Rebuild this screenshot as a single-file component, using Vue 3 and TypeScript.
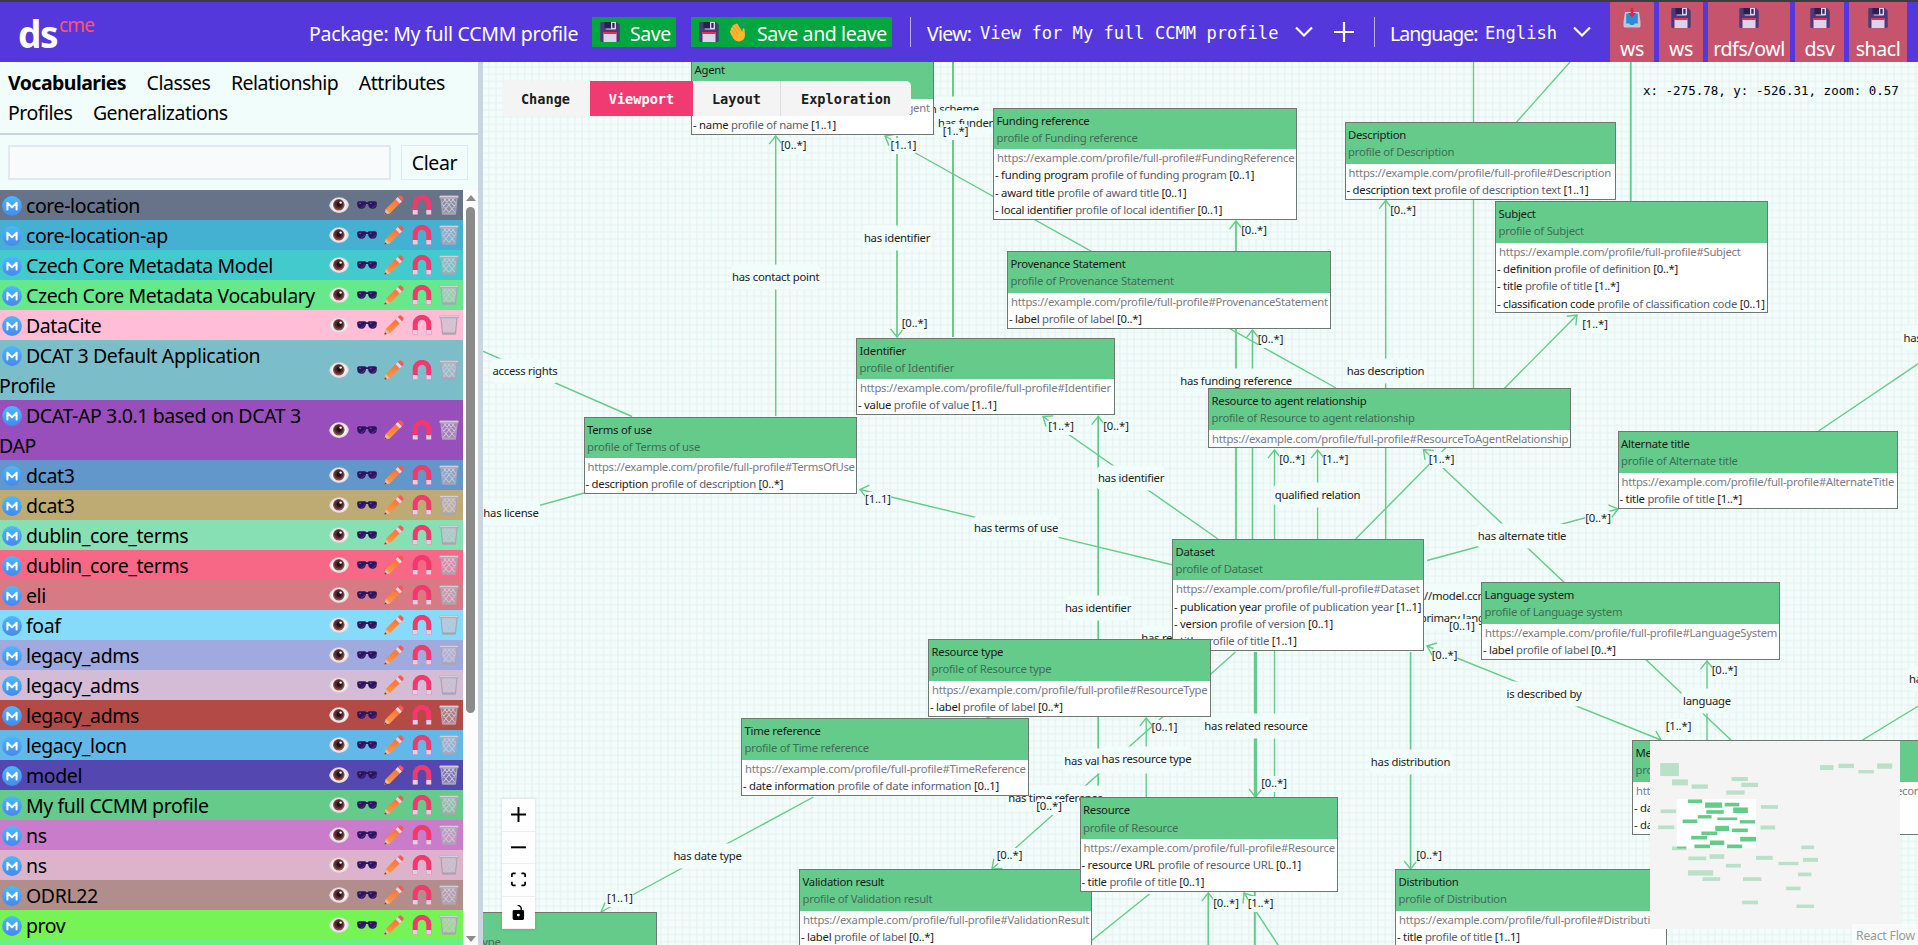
<script setup lang="ts">
interface Vocab { name: string; rest?: string; color: string }
interface Attr { name: string; card: string }
interface ClassNode { title: string; url: string; x: number; y: number; w: number; attrs: Attr[] }
type Edge = [number, number, number, number, string?, number?]
type Label = [string, number, number]

const vocabularies: Vocab[] = [
  { name: 'core-location', color: '#667389' },
  { name: 'core-location-ap', color: '#44b1d2' },
  { name: 'Czech Core Metadata Model', color: '#43cacd' },
  { name: 'Czech Core Metadata Vocabulary', color: '#66e88c' },
  { name: 'DataCite', color: '#ffbdd6' },
  { name: 'DCAT 3 Default Application', rest: 'Profile', color: '#7cbdca' },
  { name: 'DCAT-AP 3.0.1 based on DCAT 3', rest: 'DAP', color: '#994fbb' },
  { name: 'dcat3', color: '#6297cb' },
  { name: 'dcat3', color: '#bdab73' },
  { name: 'dublin_core_terms', color: '#86e0b4' },
  { name: 'dublin_core_terms', color: '#f76887' },
  { name: 'eli', color: '#d87a84' },
  { name: 'foaf', color: '#87dbfa' },
  { name: 'legacy_adms', color: '#a1aadf' },
  { name: 'legacy_adms', color: '#d4bcd6' },
  { name: 'legacy_adms', color: '#b44a45' },
  { name: 'legacy_locn', color: '#63b8ea' },
  { name: 'model', color: '#5447b0' },
  { name: 'My full CCMM profile', color: '#65cb8a' },
  { name: 'ns', color: '#c97cc9' },
  { name: 'ns', color: '#ddb3cb' },
  { name: 'ODRL22', color: '#b18d8c' },
  { name: 'prov', color: '#76f456' },
]
const rowIcons = ['eye', 'glasses', 'pencil', 'magnet', 'bin']
const tabs = ['Vocabularies', 'Classes', 'Relationship', 'Attributes', 'Profiles', 'Generalizations']
const exportsList = [
  { icon: 'inbox', text: 'ws', w: 44 },
  { icon: 'floppy', text: 'ws', w: 44 },
  { icon: 'floppy', text: 'rdfs/owl', w: 82 },
  { icon: 'floppy', text: 'dsv', w: 49 },
  { icon: 'floppy', text: 'shacl', w: 58 },
]

const a = (name: string, card: string): Attr => ({ name, card })
const nodes: ClassNode[] = [
  { title: 'Agent', url: 'Agent', x: 691, y: 57, w: 243, attrs: [a('name', '[1..1]')] },
  { title: 'Funding reference', url: 'FundingReference', x: 993, y: 107.5, w: 304, attrs: [a('funding program', '[0..1]'), a('award title', '[0..1]'), a('local identifier', '[0..1]')] },
  { title: 'Provenance Statement', url: 'ProvenanceStatement', x: 1007, y: 251, w: 323.5, attrs: [a('label', '[0..*]')] },
  { title: 'Identifier', url: 'Identifier', x: 856, y: 337.5, w: 259, attrs: [a('value', '[1..1]')] },
  { title: 'Terms of use', url: 'TermsOfUse', x: 583.5, y: 416.5, w: 273.5, attrs: [a('description', '[0..*]')] },
  { title: 'Description', url: 'Description', x: 1344.5, y: 122, w: 271, attrs: [a('description text', '[1..1]')] },
  { title: 'Subject', url: 'Subject', x: 1495, y: 201, w: 273, attrs: [a('definition', '[0..*]'), a('title', '[1..*]'), a('classification code', '[0..1]')] },
  { title: 'Resource to agent relationship', url: 'ResourceToAgentRelationship', x: 1208, y: 388, w: 363, attrs: [] },
  { title: 'Alternate title', url: 'AlternateTitle', x: 1617.5, y: 431, w: 280.5, attrs: [a('title', '[1..*]')] },
  { title: 'Dataset', url: 'Dataset', x: 1172, y: 538.7, w: 252, attrs: [a('publication year', '[1..1]'), a('version', '[0..1]'), a('title', '[1..1]')] },
  { title: 'Language system', url: 'LanguageSystem', x: 1481, y: 582, w: 299, attrs: [a('label', '[0..*]')] },
  { title: 'Resource type', url: 'ResourceType', x: 928, y: 639, w: 283, attrs: [a('label', '[0..*]')] },
  { title: 'Time reference', url: 'TimeReference', x: 741, y: 718, w: 288, attrs: [a('date information', '[0..1]')] },
  { title: 'Date type', url: 'DateType', x: 400, y: 912, w: 257, attrs: [] },
  { title: 'Validation result', url: 'ValidationResult', x: 799, y: 869, w: 293, attrs: [a('label', '[0..*]')] },
  { title: 'Resource', url: 'Resource', x: 1079.5, y: 797.3, w: 258.5, attrs: [a('resource URL', '[0..1]'), a('title', '[0..1]')] },
  { title: 'Distribution', url: 'Distribution', x: 1395, y: 869, w: 272, attrs: [a('title', '[1..1]')] },
  { title: 'Metadata record', url: 'MetadataRecord', x: 1632, y: 740, w: 290, attrs: [a('date created', '[0..1]'), a('date updated', '[0..*]')] },
]

/* x1, y1, x2, y2, arrow placement (e = end, s = start), stroke width */
const edges: Edge[] = [
  [775.7, 416, 775.7, 136, 'e'],
  [897, 136, 897, 337, 'e', 1.7],
  [953, 62, 953, 337, '', 2],
  [1336, 388, 885, 136, 'e'],
  [1385.7, 539, 1385.7, 200.5, 'e'],
  [1473.5, 62, 1473.5, 388],
  [1570, 62, 1516.6, 122],
  [1630.8, 62, 1630.8, 201, '', 1.8],
  [1355.6, 539, 1577, 315, 'e'],
  [1236, 539, 1236, 221, 'e', 1.8],
  [1252.5, 539, 1252.5, 330, 'e', 1.7],
  [1274.5, 539, 1274.5, 450, 'e'],
  [1317.6, 539, 1317.6, 450, 'e'],
  [1731, 740, 1423.5, 449.5, 'e'],
  [1427, 560.5, 1618, 509, 'e'],
  [1818.6, 431, 1920, 362.5],
  [1172, 564.7, 860, 489.5, 'e'],
  [1218, 539, 1043, 416.5, 'e'],
  [1098.2, 800, 1098.2, 416.5, 'e', 1.8],
  [632, 416.5, 480, 350],
  [584, 493, 480, 522],
  [1255.5, 652, 1255.5, 797, 'e', 3.4],
  [1274.5, 649, 1274.5, 797],
  [1146.2, 797, 1146.2, 718, 'e'],
  [1235.5, 652, 992, 869, 'e'],
  [1172, 630, 987, 718, 'e'],
  [813.5, 797, 601, 912, 'e'],
  [1410.6, 652, 1410.6, 869, 'e', 1.7],
  [1427, 646, 1661, 740, 'es'],
  [1707, 740, 1707, 661, 'e'],
  [1862.6, 740, 1920, 705],
  [1149.5, 894, 1086, 945],
  [1208.3, 950, 1208.3, 893, 'e', 1.7],
  [1254.8, 950, 1254.8, 890, '', 2],
  [1284, 954, 1244, 893, 'e'],
]

const labels: Label[] = [
  ['has contact point', 775.7, 277], ['has identifier', 897, 238], ['has identifier', 1131, 478],
  ['has identifier', 1098, 607.5], ['in scheme', 953, 108.5], ['has funder', 965.5, 123],
  ['has description', 1385.5, 371], ['has funding reference', 1236, 381], ['qualified relation', 1317.6, 495],
  ['has alternate title', 1522, 536], ['has terms of use', 1016, 528], ['access rights', 525, 371],
  ['has license', 511, 513], ['has related resource', 1256, 725.5], ['has validation result', 1115, 761],
  ['has resource type', 1146.5, 758.5], ['has time reference', 1055.5, 798], ['has date type', 707.5, 855.5],
  ['has distribution', 1410.5, 761.5], ['is described by', 1544, 694], ['language', 1707, 701],
  ['has relation', 1171, 638], ['https://model.ccmm.cz', 1453, 595.5], ['primary language', 1465, 618],
  ['has subject', 1932, 338], ['has agent', 1934, 679],
]
const cards: Label[] = [
  ['[0..*]', 793.5, 146], ['[1..1]', 903.5, 146], ['[1..*]', 955.5, 132], ['[0..*]', 914.5, 324],
  ['[0..*]', 1403, 210.5], ['[1..*]', 1595, 324.5], ['[0..*]', 1254, 231], ['[0..*]', 1270.5, 340],
  ['[0..*]', 1292, 459.5], ['[1..*]', 1335.5, 459.5], ['[1..*]', 1441.5, 459.5], ['[0..*]', 1598, 518.5],
  ['[1..1]', 878, 499.5], ['[1..*]', 1061, 426.5], ['[0..*]', 1116, 426.5], ['[0..*]', 1274, 783.5],
  ['[0..1]', 1164.5, 727.5], ['[0..*]', 1009.5, 856], ['[0..*]', 1049, 807], ['[1..1]', 620, 899],
  ['[0..*]', 1429, 856], ['[0..*]', 1444.5, 656], ['[1..*]', 1678.5, 726.5], ['[0..*]', 1724.5, 670.5],
  ['[0..*]', 1226, 903.5], ['[1..*]', 1260.5, 903.5], ['[0..1]', 1462, 627],
]

function head(tx: number, ty: number, fx: number, fy: number): string {
  const t = Math.atan2(fy - ty, fx - tx)
  const p = (s: number) => `${tx + 10.4 * Math.cos(t + s)} ${ty + 10.4 * Math.sin(t + s)}`
  return `M${p(0.67)}L${tx} ${ty}L${p(-0.67)}`
}
function arrows(e: Edge): string {
  let d = ''
  if (e[4]?.includes('e')) d += head(e[2], e[3], e[0], e[1])
  if (e[4]?.includes('s')) d += head(e[0], e[1], e[2], e[3])
  return d
}

/* minimap rectangles: x, y, width, height */
const miniOutside = [
  [25, 66, 46, 39], [54, 115, 39, 18], [102, 130, 40, 13], [200, 108, 40, 12], [224, 125, 41, 13], [187, 148, 45, 13],
  [417, 72, 33, 15], [462, 68, 38, 13], [511, 87, 38, 10], [557, 67, 37, 16], [26, 205, 38, 11], [20, 253, 40, 11],
  [272, 192, 42, 11], [271, 253, 36, 12], [54, 316, 35, 11], [94, 346, 44, 11], [146, 339, 36, 14], [186, 368, 37, 11],
  [260, 344, 41, 12], [371, 313, 31, 11], [315, 362, 49, 10], [375, 350, 37, 12], [93, 387, 62, 16], [129, 408, 43, 11],
  [228, 408, 45, 11], [363, 394, 33, 11], [334, 436, 35, 11], [226, 478, 39, 11], [359, 490, 43, 10],
]
const miniInside = [
  [93, 175, 35, 11], [135, 184, 42, 16], [183, 185, 36, 11], [204, 199, 36, 17], [138, 207, 43, 11], [117, 222, 34, 10],
  [80, 235, 36, 11], [165, 229, 49, 8], [220, 237, 38, 10], [160, 254, 34, 16], [201, 262, 39, 11], [126, 271, 39, 11],
  [101, 284, 39, 11], [221, 287, 39, 14], [147, 298, 35, 14], [109, 310, 38, 11], [189, 310, 37, 11], [66, 316, 23, 6],
]
</script>

<template>
  <div class="page">
    <svg class="defs" aria-hidden="true">
      <defs>
        <linearGradient id="gm" x1="0" y1="0" x2="0" y2="1"><stop offset="0" stop-color="#4ab9ff" /><stop offset="1" stop-color="#4688ee" /></linearGradient>
        <linearGradient id="gp" x1="0" y1="0" x2="0" y2="1"><stop offset="0" stop-color="#ff6a3c" /><stop offset="1" stop-color="#ff9f3c" /></linearGradient>
        <radialGradient id="ge"><stop offset="0.6" stop-color="#fff" /><stop offset="1" stop-color="#d9cfd6" /></radialGradient>
        <symbol id="i-m" viewBox="0 0 20 20"><circle cx="10" cy="10" r="9.9" fill="url(#gm)" /><path d="M5.4 13.6V6.8L10 11.4L14.6 6.8V13.6" fill="none" stroke="#fff" stroke-width="2" stroke-linejoin="round" stroke-linecap="round" /></symbol>
        <symbol id="i-eye" viewBox="0 0 20 20"><path d="M.1 10.5C1.3 5.5 5.5 2.300 10.2 2.300S18.800 5.300 19.900 9.500C19.200 14.800 14.500 17.900 10 17.900S1.300 14.800 .1 10.500Z" fill="url(#ge)" /><circle cx="9.800" cy="9.800" r="5.800" fill="#8a4f48" /><circle cx="9.800" cy="9.200" r="4.500" fill="#55262b" /><circle cx="10" cy="9.500" r="2.400" fill="#1d1119" /><circle cx="11.600" cy="7.600" r="1.200" fill="#fff" /></symbol>
        <symbol id="i-glasses" viewBox="0 0 20 20"><path d="M.2 7.200Q1 6 3 6.200H7.500Q9 6.200 9.300 7.200H10.700Q11 6.200 12.500 6.200H17Q19 6 19.800 7.200V9.500Q19.500 13.800 15.500 13.800Q11.500 13.800 11 9H9Q8.500 13.800 4.500 13.800Q.5 13.800 .2 9.500Z" fill="#2c145e" /><path d="M4 12.500Q7 12.500 7.800 9.500M15 12.500Q18 12.500 18.700 9.500" fill="none" stroke="#54309a" stroke-width="1" /><path d="M2.200 8.300H4M12.800 8.300H14.500" stroke="#7c62b5" stroke-width="1" /></symbol>
        <symbol id="i-pencil" viewBox="0 0 20 20"><path d="M.4 19.600L1.800 14L13.200 2.600L17.400 6.800L6 18.200Z" fill="url(#gp)" /><path d="M.4 19.600L1.800 14L6 18.200Z" fill="#e0bfa8" /><path d="M.4 19.600L1 17.200L2.900 19Z" fill="#5c3350" /><path d="M11.600 4.200L13.800 2L18 6.200L15.800 8.400Z" fill="#ded6ea" /><path d="M13.800 2L15.500 .5Q16.500 0 17.500 .9L19.200 2.600Q20 3.600 19.300 4.800L18 6.200Z" fill="#f75a50" /></symbol>
        <symbol id="i-magnet" viewBox="0 0 20 20"><path d="M3.200 19.500V9.300A6.800 7 0 0 1 16.800 9.300V19.500" fill="none" stroke="#f2386c" stroke-width="5" /><path d="M.8 15H5.700V19.600H.8ZM14.300 15H19.200V19.600H14.300Z" fill="#dcd1e6" /></symbol>
        <symbol id="i-bin" viewBox="0 0 20 20"><path d="M1.900 2.500L3.500 18.500H16.500L18.100 2.500" fill="#c3bdcd" fill-opacity=".4" /><path d="M4.500 3L15.700 17M8.500 3L16.300 12.500M12.500 3L17 8.500M15.500 3L4.300 17M11.500 3L3.700 12.500M7.500 3L3 8.500M2.900 9L10.500 18M17.100 9L9.500 18" fill="none" stroke="#cbc5d4" stroke-width="1.100" /><path d="M2 3L3.500 18.300H16.500L18 3" fill="none" stroke="#aaa4b5" stroke-width="1.200" /><rect x=".3" y=".5" width="19.400" height="2.700" rx="1" fill="#b3adbb" /><rect x="1" y=".9" width="18" height="1" fill="#d6d2dc" /><rect x="3" y="17.500" width="14" height="2.200" rx="1" fill="#aaa4b3" /></symbol>
        <symbol id="i-floppy" viewBox="0 0 20 20"><path d="M1.300 0H17L19.700 2.700V18.500Q19.700 20 18.200 20H1.800Q.3 20 .3 18.500V1Q.3 0 1.300 0Z" fill="#4c3a78" /><path d="M5.500 0H16V6.700Q16 7.500 15 7.500H6.500Q5.500 7.500 5.500 6.700Z" fill="#dcd6e6" /><path d="M4.500 0H11V6.500H5.500Q4.500 6.500 4.500 5.500Z" fill="#2b1d4c" /><rect x="12.300" y="1" width="2.300" height="4.800" fill="#32235a" /><rect x="3.500" y="10.500" width="13" height="9.500" fill="#ddd3ea" /><rect x="3.500" y="10" width="13" height="2" fill="#ee2b4f" /></symbol>
        <symbol id="i-inbox" viewBox="0 0 20 20"><path d="M3 4H17L18.500 14V18Q18.500 19.500 17 19.500H3Q1.500 19.500 1.500 18V14Z" fill="#c9c4d4" /><path d="M4.200 5.500H15.800V15.500H12.500Q12.500 17 11 17H9Q7.500 17 7.500 15.500H4.200Z" fill="#2b8bdc" /><path d="M8.800 0H11.200V5H13.800L10 9.500L6.200 5H8.800Z" fill="#e3204d" /></symbol>
        <symbol id="i-wave" viewBox="0 0 20 20"><path d="M3.200 10.800L6.500 16.800Q9 20 13 19.300Q18 18.300 18 13L17.600 7.600Q17.200 5.800 15.800 6.500L15.300 9.800L10.500 2Q9.200 .8 8.200 2.200L6.500 3Q5 3.500 5.500 5L4.300 5.800Q3 6.700 4 8Q2.200 9 3.200 10.800Z" fill="#ffb52e" /><path d="M8.200 2.500L13 10M5.700 4.800L10.800 12M4.200 8L8.800 13.500" stroke="#e8912c" stroke-width=".8" fill="none" /><path d="M13.500 1Q16.500 1.800 17.500 4.500M15.800 .3Q18.300 1.200 19.200 3.500M1 13Q1.300 16.500 4 18.500" fill="none" stroke="#3a86ad" stroke-width="1.100" /></symbol>
      </defs>
    </svg>

    <header class="top">
      <div class="logo"><b>ds</b><span>cme</span></div>
      <span class="t pkg">Package: My full CCMM profile</span>
      <button class="green save"><svg><use href="#i-floppy" /></svg><span class="t">Save</span></button>
      <button class="green leave"><svg><use href="#i-floppy" /></svg><svg class="wv"><use href="#i-wave" /></svg><span class="t">Save and leave</span></button>
      <i class="bar b1"></i>
      <span class="t vl">View:</span><span class="t mono vn">View for My full CCMM profile</span>
      <svg class="chev c1" viewBox="0 0 18 12"><path d="M1 1.500L9 9.500L17 1.500" /></svg>
      <svg class="plus" viewBox="0 0 20 20"><path d="M10 0V20M0 10H20" /></svg>
      <i class="bar b2"></i>
      <span class="t ll">Language:</span><span class="t mono ln">English</span>
      <svg class="chev c2" viewBox="0 0 18 12"><path d="M1 1.500L9 9.500L17 1.500" /></svg>
      <div class="exports">
        <button v-for="(x, i) in exportsList" :key="i" :style="{ width: x.w + 'px' }">
          <svg><use :href="'#i-' + x.icon" /></svg><span>{{ x.text }}</span>
        </button>
      </div>
    </header>

    <div class="body">
      <aside class="side">
        <nav class="tabs"><span v-for="(t, i) in tabs" :key="t" :class="{ on: i === 0 }">{{ t }}</span></nav>
        <div class="search"><input type="text" /><button>Clear</button></div>
        <div class="scroll">
          <ul class="list">
            <li v-for="(v, i) in vocabularies" :key="i" :style="{ background: v.color }">
              <div class="name"><svg><use href="#i-m" /></svg>{{ v.name }}<template v-if="v.rest"><br />{{ v.rest }}</template></div>
              <div class="acts"><svg v-for="ic in rowIcons" :key="ic"><use :href="'#i-' + ic" /></svg></div>
            </li>
            <li class="next"></li>
          </ul>
          <div class="sb"><i class="up"></i><i class="thumb"></i><i class="down"></i></div>
        </div>
      </aside>
      <div class="split"></div>

      <main class="canvas">
        <svg class="grid"><defs><pattern id="pg" x="2.300" y="1.400" width="7.170" height="7.170" patternUnits="userSpaceOnUse"><path d="M3.600 0V7.170M0 3.600H7.170" stroke="#ebefed" stroke-width="1" /></pattern></defs><rect width="100%" height="100%" fill="url(#pg)" /></svg>
        <div class="viewport">
          <svg class="edges" width="1918" height="945">
            <g v-for="(e, i) in edges" :key="i" :stroke-width="e[5] ?? 1.4">
              <line :x1="e[0]" :y1="e[1]" :x2="e[2]" :y2="e[3]" />
              <path v-if="e[4]" :d="arrows(e)" stroke-width="1.400" />
            </g>
          </svg>
          <div v-for="(l, i) in labels" :key="'l' + i" class="label" :style="{ left: l[1] + 'px', top: l[2] + 'px' }">{{ l[0] }}</div>
          <div v-for="(l, i) in cards" :key="'c' + i" class="label card" :style="{ left: l[1] + 'px', top: l[2] + 'px' }">{{ l[0] }}</div>
          <section v-for="n in nodes" :key="n.title" class="node" :style="{ left: n.x + 'px', top: n.y + 'px', width: n.w + 'px' }">
            <div class="hd"><div>{{ n.title }}</div><div class="sub">profile of {{ n.title }}</div></div>
            <div class="url">https://example.com/profile/full-profile#{{ n.url }}</div>
            <div v-for="at in n.attrs" :key="at.name" class="attr">- {{ at.name }} <em>profile of {{ at.name }}</em> {{ at.card }}</div>
          </section>
        </div>

        <div class="modes"><button class="m1">Change</button><button class="m2">Viewport</button><button class="m3">Layout</button><button class="m4">Exploration</button></div>
        <div class="pos">x: -275.78, y: -526.31, zoom: 0.57</div>
        <div class="ctrl">
          <button><svg viewBox="0 0 32 32"><path d="M32 18.133H18.133V32h-4.266V18.133H0v-4.266h13.867V0h4.266v13.867H32z" /></svg></button>
          <button><svg viewBox="0 0 32 5"><path d="M0 0h32v4.200H0z" /></svg></button>
          <button><svg viewBox="0 0 32 30"><path d="M3.692 4.630c0-.53.4-.938.939-.938h5.215V0H4.708C2.130 0 0 2.054 0 4.630v5.216h3.692V4.630zM27.354 0h-5.200v3.692h5.170c.53 0 .984.400.984.939v5.215H32V4.631A4.624 4.624 0 0027.354 0zm.954 24.830c0 .532-.400.940-.939.940h-5.215v3.768h5.215c2.577 0 4.631-2.130 4.631-4.707v-5.139h-3.692v5.139zm-23.677.940c-.531 0-.939-.400-.939-.940v-5.138H0v5.139c0 2.577 2.130 4.707 4.708 4.707h5.138V25.770H4.631z" /></svg></button>
          <button><svg viewBox="0 0 25 32"><path d="M21.333 10.667H19.810V7.619C19.810 3.429 16.380 0 12.190 0c-4.114 1.828-1.370 2.133.305 2.438 1.676.305 4.420 2.590 4.420 5.181v3.048H3.047A3.056 3.056 0 000 13.714v15.238A3.056 3.056 0 003.048 32h18.285a3.056 3.056 0 003.048-3.048V13.714a3.056 3.056 0 00-3.048-3.047zM12.190 24.533a3.056 3.056 0 01-3.047-3.047 3.056 3.056 0 013.047-3.048 3.056 3.056 0 013.048 3.048 3.056 3.056 0 01-3.048 3.047z" /></svg></button>
        </div>
        <svg class="mini" viewBox="0 0 613 563" preserveAspectRatio="none">
          <rect width="613" height="563" fill="#f4f4f4" />
          <rect v-for="(r, i) in miniOutside" :key="'o' + i" :x="r[0]" :y="r[1]" :width="r[2]" :height="r[3]" fill="#b9e1c8" />
          <rect x="66" y="174" width="194" height="147" fill="#fff" />
          <rect v-for="(r, i) in miniInside" :key="'i' + i" :x="r[0]" :y="r[1]" :width="r[2]" :height="r[3]" fill="#65cb8a" />
        </svg>
        <div class="rf">React Flow</div>
      </main>
    </div>
  </div>
</template>

<style>
body { margin: 0; overflow: hidden; }
</style>

<style scoped>
* { box-sizing: border-box; }
.page { width: 1918px; height: 945px; overflow: hidden; display: flex; flex-direction: column; font-family: "Noto Sans", "Open Sans", sans-serif; font-size: 19.500px; letter-spacing: -0.400px; color: #000; background: #f0fdfa; }
.defs { position: absolute; width: 0; height: 0; }
button { font: inherit; letter-spacing: inherit; color: inherit; border: 0; padding: 0; margin: 0; background: none; }
.mono, .modes, .pos { font-family: "DejaVu Sans Mono", monospace; letter-spacing: 0; }
.top { height: 62px; flex: none; background: #5438dc; border-top: 2px solid #3d3d3d; color: #fff; display: flex; align-items: center; white-space: nowrap; }
.t { padding-top: 2px; }
.logo { width: 309px; flex: none; padding-left: 18px; display: flex; align-items: flex-start; }
.logo b { font-size: 37px; line-height: 56px; letter-spacing: -1.500px; width: 41px; padding-top: 4px; }
.logo span { color: #ff5468; font-size: 19px; line-height: 26px; padding-top: 10px; letter-spacing: -0.800px; }
.pkg { width: 283px; flex: none; letter-spacing: -0.280px; }
.green { height: 30px; background: #00a63e; display: flex; align-items: center; padding-left: 8px; flex: none; }
.green svg { width: 20px; height: 20px; margin-right: 10px; flex: none; }
.save { width: 84px; margin-right: 15px; }
.leave { width: 201px; }
.leave svg { margin-right: 8px; }
.leave .wv { margin-right: 10px; }
.bar { width: 1px; height: 30px; background: #b9aff0; flex: none; }
.b1 { margin: 0 16px 0 18px; }
.vl { width: 53px; flex: none; letter-spacing: -0.700px; }
.mono { font-size: 17.100px; }
.vn { width: 315px; flex: none; }
.chev { width: 18px; height: 12px; flex: none; }
.chev path, .plus path { fill: none; stroke: #fff; stroke-width: 2.200; }
.plus { width: 20px; height: 20px; margin-left: 21px; flex: none; }
.b2 { margin: 0 15px 0 20px; }
.ll { width: 95px; flex: none; letter-spacing: -1px; }
.ln { width: 88px; flex: none; }
.exports { display: flex; gap: 5px; margin-left: 19px; align-self: stretch; }
.exports button { background: #c7546d; display: flex; flex-direction: column; align-items: center; flex: none; }
.exports svg { width: 20px; height: 20px; margin-top: 6px; flex: none; }
.exports span { line-height: 26px; margin-top: 8px; }
.body { flex: 1; min-height: 0; display: flex; }
.side { width: 478px; flex: none; display: flex; flex-direction: column; }
.tabs { height: 72.500px; flex: none; border-bottom: 2px solid #cad5e2; padding: 6px 8px 0; display: flex; flex-wrap: wrap; column-gap: 20.500px; line-height: 30px; align-content: flex-start; letter-spacing: -0.500px; }
.tabs .on { font-weight: 700; letter-spacing: -0.550px; }
.search { height: 55.500px; flex: none; padding: 10.500px 10px 10px 8px; display: flex; gap: 10px; }
.search input { width: 383px; border: 2px solid #e2e8f0; background: #f8fafc; outline: 0; padding: 0; height: 35px; }
.search button { width: 67px; height: 35px; border: 1px solid #e2e8f0; }
.scroll { flex: 1; min-height: 0; display: flex; overflow: hidden; }
.list { list-style: none; margin: 0; padding: 0; width: 463px; }
.list li { display: flex; align-items: center; justify-content: space-between; line-height: 30px; height: 30px; padding-right: 4px; }
.list li:has(br) { height: 60px; }
.list .next { background: #66f284; }
.name { white-space: nowrap; margin-left: -1px; position: relative; top: 1px; }
.name svg { width: 20px; height: 20px; vertical-align: -3px; margin: 0 4px 0 3px; }
.acts { display: flex; gap: 7.500px; }
.acts svg { width: 20px; height: 20px; }
.sb { width: 15px; background: #fcfcfc; display: flex; flex-direction: column; align-items: center; }
.up { border: 5px solid transparent; border-bottom: 6px solid #8b8b8b; border-top: 0; margin-top: 5px; }
.thumb { width: 9px; height: 506px; background: #8b8b8b; border-radius: 5px; margin-top: 6px; }
.down { border: 5px solid transparent; border-top: 6px solid #8b8b8b; border-bottom: 0; margin-top: auto; margin-bottom: 3px; }
.split { width: 5px; background: #cad5e2; flex: none; }
.canvas { flex: 1; position: relative; overflow: hidden; }
.grid { position: absolute; inset: 0; width: 100%; height: 100%; }
.viewport { position: absolute; left: -483px; top: -62px; width: 1918px; height: 945px; font-size: 11.300px; letter-spacing: -0.250px; }
.edges { position: absolute; inset: 0; fill: none; stroke: #65cb8a; }
.label { position: absolute; transform: translate(-50%, -50%); white-space: nowrap; background: #f0fdfa; line-height: 24px; padding: 0 2.500px 1px; border-radius: 8px; color: #222; }
.card { line-height: 14px; padding: 0 0 2px; border-radius: 3px; letter-spacing: -0.100px; }
.node { position: absolute; background: #fff; border: 1px solid #6d7873; white-space: nowrap; padding-bottom: 0.500px; line-height: 17.350px; color: #1a1a1a; overflow: hidden; }
.hd { background: #65cb8a; height: 40.500px; padding: 3px 3px 0 2.500px; }
.sub { color: #436b58; }
.url { color: #777b85; padding-left: 3px; }
.attr { padding-left: 1px; }
.attr em { font-style: normal; color: #566070; }
.modes { position: absolute; left: 20px; top: 19px; height: 35px; display: flex; font-size: 13.600px; font-weight: 700; border-radius: 5px; overflow: hidden; background: #f4f4f4; color: #1c1c1c; }
.m1 { width: 87px; padding-right: 2px; }
.m2 { width: 103px; background: #ef3b72; color: #fff; }
.m3 { width: 88px; border-right: 1px solid #ddd; }
.m4 { width: 130px; }
.pos { position: absolute; left: 1160px; top: 21px; font-size: 12.500px; line-height: 16px; white-space: pre; }
.ctrl { position: absolute; left: 19px; top: 737px; width: 33px; box-shadow: 0 0 2px 1px rgba(0, 0, 0, 0.08); }
.ctrl button { width: 33px; height: 32.500px; background: #fefefe; border-bottom: 1px solid #eee; display: flex; align-items: center; justify-content: center; }
.ctrl svg { width: 15px; height: 15px; }
.mini { position: absolute; left: 1167px; top: 679px; width: 250px; height: 188px; }
.rf { position: absolute; right: 0; bottom: 0; width: 66px; height: 21px; background: rgba(255, 255, 255, 0.5); color: #999; font-size: 12.200px; line-height: 15px; padding: 4px 0 0 4px; white-space: nowrap; letter-spacing: -0.200px; }
</style>
